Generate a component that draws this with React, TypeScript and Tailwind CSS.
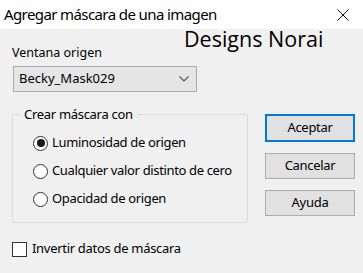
import React from 'react';

const Radio: React.FC<{ checked?: boolean; label: string }> = ({ checked, label }) => (
  <div className="flex items-center h-[28px]">
    <span className="w-[15px] h-[15px] rounded-full border border-[#333333] bg-white flex items-center justify-center">
      {checked && <span className="w-[8px] h-[8px] rounded-full bg-[#1a1a1a]"></span>}
    </span>
    <span className="ml-[4px] text-[13px] tracking-[-0.35px]">{label}</span>
  </div>
);

const Btn: React.FC<{ label: string; primary?: boolean }> = ({ label, primary }) => (
  <div
    className={
      primary
        ? 'w-[90px] h-[28px] border-2 border-[#0078d7] bg-[#e1e1e1] flex items-center justify-center text-[13px] tracking-[-0.3px]'
        : 'w-[90px] h-[26px] border border-[#adadad] bg-[#e1e1e1] flex items-center justify-center text-[13px] tracking-[-0.3px]'
    }
  >
    {label}
  </div>
);

export default function App() {
  return (
    <div className="w-[363px] h-[273px] bg-[#f0f0f0] relative text-black font-['Noto_Sans',sans-serif] overflow-hidden">
      {/* title bar */}
      <div className="h-[29px] bg-white flex items-center justify-between pl-[4px] pr-[14px]">
        <span className="text-[15px] leading-none tracking-[-0.6px]">Agregar máscara de una imagen</span>
        <svg width="12" height="12" viewBox="0 0 12 12" className="mt-[1px]">
          <path d="M0.5 0.5 L11.5 11.5 M11.5 0.5 L0.5 11.5" stroke="#111" strokeWidth="1" />
        </svg>
      </div>

      {/* watermark */}
      <div className="absolute left-[184px] top-[25px] text-[21.5px] leading-[28px] font-['Open_Sans',sans-serif]">Designs Norai</div>

      <div className="flex">
        <div className="pl-[12px] pt-[16px] w-[248px]">
          <div className="text-[12.5px] leading-[16px]">Ventana origen</div>
          <div className="mt-[5px] ml-[1px] w-[184px] h-[26px] border border-[#adadad] bg-[#e5e5e5] flex items-center justify-between pl-[5px] pr-[7px]">
            <span className="text-[13px]">Becky_Mask029</span>
            <svg width="10" height="6" viewBox="0 0 10 6">
              <path d="M0.5 0.5 L5 5 L9.5 0.5" fill="none" stroke="#555" strokeWidth="1.2" />
            </svg>
          </div>

          <fieldset className="mt-[14px] border border-[#dcdcdc] rounded-[2px] pb-[9px]">
            <legend className="ml-[7px] px-[4px] text-[13px] leading-[16px] tracking-[-0.3px]">Crear máscara con</legend>
            <div className="pl-[20px] pt-[7px]">
              <Radio checked label="Luminosidad de origen" />
              <Radio label="Cualquier valor distinto de cero" />
              <Radio label="Opacidad de origen" />
            </div>
          </fieldset>

          <div className="mt-[18px] flex items-center h-[16px]">
            <span className="w-[15px] h-[15px] border border-[#333333] bg-white"></span>
            <span className="ml-[5px] text-[13px] tracking-[-0.3px]">Invertir datos de máscara</span>
          </div>
        </div>

        <div className="ml-[17px] pt-[85px] flex flex-col gap-[11px]">
          <Btn primary label="Aceptar" />
          <Btn label="Cancelar" />
          <Btn label="Ayuda" />
        </div>
      </div>
    </div>
  );
}
